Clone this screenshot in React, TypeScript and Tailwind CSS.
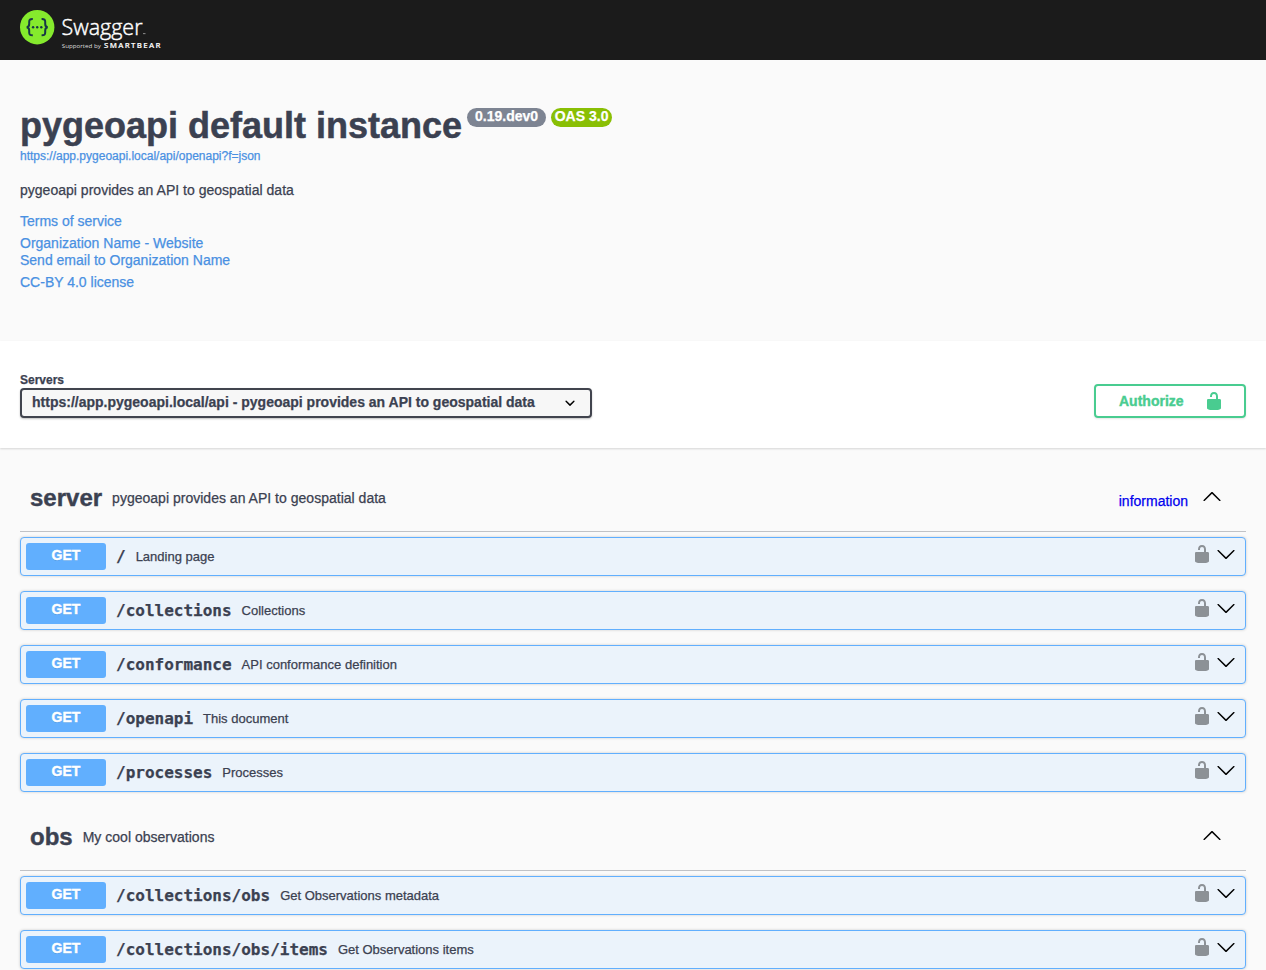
const UNLOCKED =
  'M15.8 8H14V5.6C14 2.703 12.665 1 10 1 7.334 1 6 2.703 6 5.6V6h2v-.801C8 3.754 8.797 3 10 3c1.203 0 2 .754 2 2.199V8H4c-.553 0-1 .646-1 1.199V17c0 .549.428 1.139.951 1.307l1.197.387C5.672 18.861 6.55 19 7.1 19h5.8c.549 0 1.428-.139 1.951-.307l1.196-.387c.524-.167.953-.757.953-1.306V9.199C17 8.646 16.352 8 15.8 8z';
const ARROW_UP =
  'M17.418 14.908c.272.268.709.268.979 0s.271-.701 0-.969l-7.908-7.83c-.27-.268-.707-.268-.979 0l-7.908 7.83c-.27.268-.27.701 0 .969.271.268.709.268.979 0L10 7.767l7.418 7.141z';
const ARROW_DOWN =
  'M17.418 6.109c.272-.268.709-.268.979 0s.271.701 0 .969l-7.908 7.83c-.27.268-.707.268-.979 0l-7.908-7.83c-.27-.268-.27-.701 0-.969.271-.268.709-.268.979 0L10 13.25l7.418-7.141z';
const SELECT_ARROW =
  'M13.418 7.859a.695.695 0 01.978 0 .68.68 0 010 .969l-3.908 3.83a.697.697 0 01-.979 0l-3.908-3.83a.68.68 0 010-.969.695.695 0 01.978 0L10 11l3.418-3.141z';

function Icon({ d, className = '' }: { d: string; className?: string }) {
  return (
    <svg viewBox="0 0 20 20" className={`size-5 shrink-0 fill-current ${className}`} aria-hidden="true">
      <path d={d} />
    </svg>
  );
}

function Logo() {
  return (
    <svg width="150" height="44" viewBox="0 0 150 44" role="img" aria-label="Swagger">
      <circle cx="17.2" cy="19.2" r="17.2" fill="#85ea2d" />
      <g fill="none" stroke="#173647" strokeWidth="2">
        <path d="M12.8 11.1c-2.7-.1-3.6.6-3.6 2.7v2.100c0 2-.5 3-2.500 3.300 2 .3 2.500 1.300 2.500 3.300v2.100c0 2.100.9 2.800 3.600 2.700" />
        <path d="M21.600 11.100c2.700-.1 3.600.6 3.600 2.700v2.100c0 2 .5 3 2.500 3.300-2 .3-2.500 1.300-2.500 3.300v2.100c0 2.100-.9 2.800-3.600 2.700" />
      </g>
      <g fill="#173647">
        <circle cx="13.1" cy="19.2" r="1.2" />
        <circle cx="17.2" cy="19.2" r="1.2" />
        <circle cx="21.3" cy="19.2" r="1.2" />
      </g>
      <text x="41.5" y="26.5" textLength="81" lengthAdjust="spacingAndGlyphs" fill="#fff" stroke="#fff" strokeWidth="0.45" fontSize="22.5" fontWeight="300" fontFamily="'Open Sans', sans-serif">Swagger</text>
      <rect x="123" y="25.3" width="2.5" height="0.8" fill="#aaa" />
      <text x="41.8" y="40" textLength="39" lengthAdjust="spacingAndGlyphs" fill="#ddd" fontSize="6" fontFamily="'Open Sans', sans-serif">Supported by</text>
      <text x="84" y="40" textLength="56.5" fill="#fff" stroke="#fff" strokeWidth="0.15" fontSize="7.8" fontWeight="600" fontFamily="'Open Sans', sans-serif">SMARTBEAR</text>
    </svg>
  );
}

type Operation = { path: string; summary: string };
type Section = { name: string; description: string; link?: string; operations: Operation[] };

const sections: Section[] = [
  {
    name: 'server',
    description: 'pygeoapi provides an API to geospatial data',
    link: 'information',
    operations: [
      { path: '/', summary: 'Landing page' },
      { path: '/collections', summary: 'Collections' },
      { path: '/conformance', summary: 'API conformance definition' },
      { path: '/openapi', summary: 'This document' },
      { path: '/processes', summary: 'Processes' },
    ],
  },
  {
    name: 'obs',
    description: 'My cool observations',
    operations: [
      { path: '/collections/obs', summary: 'Get Observations metadata' },
      { path: '/collections/obs/items', summary: 'Get Observations items' },
    ],
  },
];

function OperationRow({ path, summary }: Operation) {
  return (
    <div className="mb-[15px] flex h-[39px] items-center rounded border border-[#61affe] bg-[#ebf3fb] pr-[9px] pl-[5px] shadow-[0_0_3px_rgba(0,0,0,0.19)]">
      <span className="h-[27px] w-20 rounded-[3px] bg-[#61affe] pt-1 text-center text-sm leading-4 font-bold text-white [-webkit-text-stroke:0.4px] [text-shadow:0_1px_0_rgba(0,0,0,0.1)]">
        GET
      </span>
      <span className="ml-2.5 font-['DejaVu_Sans_Mono',monospace] text-base leading-5 font-semibold">{path}</span>
      <span className="ml-2.5 text-[13px] leading-4">{summary}</span>
      <span className="mb-[5px] ml-auto flex gap-1 text-black">
        <Icon d={UNLOCKED} className="opacity-40" />
        <Icon d={ARROW_DOWN} />
      </span>
    </div>
  );
}

function TagSection({ name, description, link, operations }: Section) {
  return (
    <section className="mb-[15px]">
      <div className="mb-[5px] flex h-[64px] items-center border-b border-[#3b4151]/30 pr-6 pl-2.5">
        <h3 className="mb-[3px] text-2xl leading-7 font-bold [-webkit-text-stroke:0.4px]">{name}</h3>
        <p className="mb-1 ml-2.5 text-sm leading-4 tracking-[0.015px]">{description}</p>
        <span className="mb-[7px] ml-auto flex items-center text-black">
          {link && <a className="mt-[9px] mr-3.5 text-sm leading-4 text-[#0000ee]">{link}</a>}
          <Icon d={ARROW_UP} />
        </span>
      </div>
      {operations.map((op) => (
        <OperationRow key={op.path} {...op} />
      ))}
    </section>
  );
}

export default function App() {
  return (
    <div className="h-[970px] overflow-hidden bg-[#fafafa] font-['Liberation_Sans',Arial,sans-serif] text-[#3b4151] [-webkit-text-stroke:0.25px]">
      <header className="h-[60px] bg-[#1b1b1b] pt-2 pl-5">
        <Logo />
      </header>

      <div className="h-[281px] px-5 pt-[45px]">
        <div className="flex items-start">
          <h2 className="text-4xl leading-[42px] font-bold [-webkit-text-stroke:0.5px]">pygeoapi default instance</h2>
          <span className="mt-[3px] ml-[5px] flex h-[19px] gap-[5px] text-sm leading-[17px] font-bold text-white">
            <span className="w-[79px] rounded-full bg-[#7d8492] text-center">0.19.dev0</span>
            <span className="w-[61px] rounded-full bg-[#89bf04] text-center">OAS 3.0</span>
          </span>
        </div>
        <a className="mt-0.5 block text-xs leading-[14px] text-[#4990e2]">https://app.pygeoapi.local/api/openapi?f=json</a>
        <p className="mt-[19px] text-sm leading-4 tracking-[0.015px]">pygeoapi provides an API to geospatial data</p>
        <div className="mt-[15px] flex flex-col text-sm leading-4 text-[#4990e2]">
          <a>Terms of service</a>
          <a className="mt-1.5">Organization Name - Website</a>
          <a className="mt-px">Send email to Organization Name</a>
          <a className="mt-1.5">CC-BY 4.0 license</a>
        </div>
      </div>

      <div className="flex h-[107px] items-end justify-between bg-white px-5 pb-[30px] shadow-[0_1px_2px_rgba(0,0,0,0.15)]">
        <div>
          <div className="text-xs leading-[14px] font-bold">Servers</div>
          <div className="mt-px flex h-[30px] w-[572px] items-center justify-between rounded border-2 border-[#41444e] bg-[#f7f7f7] px-2.5 text-sm font-bold shadow-[0_1px_2px_rgba(0,0,0,0.25)]">
            <span className="mb-0.5">https://app.pygeoapi.local/api - pygeoapi provides an API to geospatial data</span>
            <Icon d={SELECT_ARROW} className="text-black" />
          </div>
        </div>
        <button className="flex h-[34px] w-[152px] items-center justify-between rounded border-2 border-[#49cc90] pr-5 pl-[23px] text-sm font-bold text-[#49cc90] shadow-[0_1px_2px_rgba(0,0,0,0.1)] [-webkit-text-stroke:0.4px]">
          <span>Authorize</span>
          <Icon d={UNLOCKED} />
        </button>
      </div>

      <main className="px-5 pt-5">
        {sections.map((section) => (
          <TagSection key={section.name} {...section} />
        ))}
      </main>
    </div>
  );
}
